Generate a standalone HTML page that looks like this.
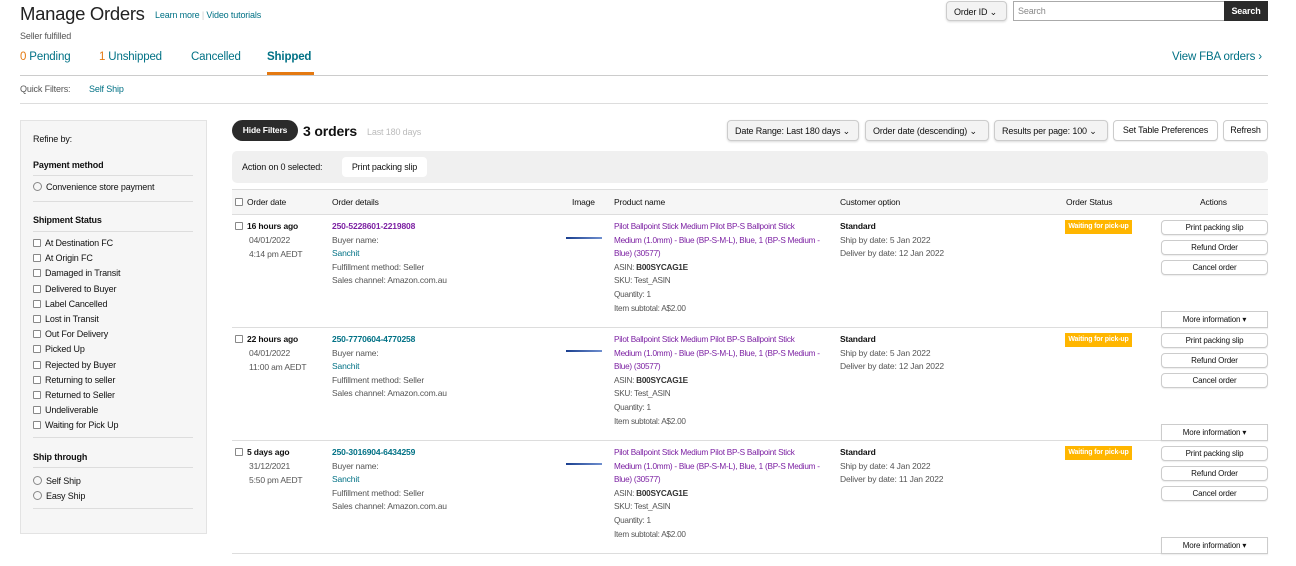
<!DOCTYPE html>
<html><head><meta charset="utf-8"><style>
*{box-sizing:border-box;margin:0;padding:0}
body{width:1296px;height:566px;background:#fff;font-family:"Liberation Sans",sans-serif;color:#111;position:relative;overflow:hidden;font-size:9px;letter-spacing:-0.15px}
.a{position:absolute;white-space:nowrap}
.teal{color:#007185}
.g{color:#555}
.btn{position:absolute;border:1px solid #ccc;border-radius:4px;background:#fff;text-align:center;font-size:8px;color:#111;box-shadow:0 1px 1px rgba(0,0,0,.08)}
.dd{position:absolute;border:1px solid #ccc;border-radius:4px;background:#f3f3f3;font-size:9px;padding:0 7px;line-height:20px;box-shadow:0 1px 2px rgba(0,0,0,.15)}
.cb{display:inline-block;width:8px;height:8px;border:1px solid #888;border-radius:1px;vertical-align:-1px;margin-right:4px;background:#fff}
.rd{display:inline-block;width:9px;height:9px;border:1px solid #888;border-radius:50%;vertical-align:-1px;margin-right:4px}
.row{position:absolute;left:232px;width:1036px;height:113px;border-bottom:1px solid #ddd}
.row .a{line-height:13.6px;font-size:8.5px}
.row .p{font-size:8.2px;letter-spacing:-0.25px}
.pur{color:#7b1fa2}
</style></head><body>
<div class="a" style="left:20px;top:3px;font-size:18.5px;color:#222;letter-spacing:-0.3px">Manage Orders</div>
<div class="a teal" style="left:155px;top:10px;font-size:9px">Learn more <span style="color:#ccc">|</span> Video tutorials</div>
<div class="a g" style="left:20px;top:31px;font-size:9px">Seller fulfilled</div>
<div class="a" style="left:20px;top:51px;font-size:11.5px"><span style="color:#e47911">0</span> <span class="teal">Pending</span></div>
<div class="a" style="left:99px;top:51px;font-size:11.5px"><span style="color:#e47911">1</span> <span class="teal">Unshipped</span></div>
<div class="a teal" style="left:191px;top:51px;font-size:11.5px">Cancelled</div>
<div class="a teal" style="left:267px;top:51px;font-size:11.5px;font-weight:bold">Shipped</div>
<div class="a" style="left:267px;top:72px;width:47px;height:3px;background:#e47911"></div>
<div class="a" style="left:20px;top:75px;width:1248px;height:1px;background:#ccc"></div>
<div class="a g" style="left:20px;top:84px;font-size:9px">Quick Filters:</div>
<div class="a teal" style="left:89px;top:84px;font-size:9px">Self Ship</div>
<div class="a" style="left:20px;top:103px;width:1248px;height:1px;background:#ddd"></div>
<div class="dd" style="left:946px;top:1px;height:20px;width:61px">Order ID ⌄</div>
<div class="a" style="left:1013px;top:1px;width:212px;height:20px;border:1px solid #aaa;font-size:9px;color:#888;line-height:18px;padding-left:4px">Search</div>
<div class="a" style="left:1224px;top:1px;width:44px;height:20px;background:#2b2b2b;color:#fff;font-weight:bold;font-size:9px;line-height:20px;text-align:center">Search</div>
<div class="a teal" style="left:1172px;top:51px;font-size:11.5px">View FBA orders ›</div>

<div class="a" style="left:20px;top:120px;width:187px;height:414px;background:#f6f6f6;border:1px solid #e3e3e3"></div>
<div class="a" style="left:33px;top:134px;font-size:9px">Refine by:</div>
<div class="a" style="left:33px;top:160px;font-size:9px;font-weight:bold">Payment method</div>
<div class="a" style="left:33px;top:175px;width:160px;height:1px;background:#ddd"></div>
<div class="a" style="left:33px;top:182px;font-size:9px"><span class="rd"></span>Convenience store payment</div>
<div class="a" style="left:33px;top:201px;width:160px;height:1px;background:#ddd"></div>
<div class="a" style="left:33px;top:215px;font-size:9px;font-weight:bold">Shipment Status</div>
<div class="a" style="left:33px;top:231px;width:160px;height:1px;background:#ddd"></div>
<div class="a" style="left:33px;top:236px;font-size:9px;line-height:15.2px">
<span class="cb"></span>At Destination FC<br><span class="cb"></span>At Origin FC<br><span class="cb"></span>Damaged in Transit<br><span class="cb"></span>Delivered to Buyer<br><span class="cb"></span>Label Cancelled<br><span class="cb"></span>Lost in Transit<br><span class="cb"></span>Out For Delivery<br><span class="cb"></span>Picked Up<br><span class="cb"></span>Rejected by Buyer<br><span class="cb"></span>Returning to seller<br><span class="cb"></span>Returned to Seller<br><span class="cb"></span>Undeliverable<br><span class="cb"></span>Waiting for Pick Up</div>
<div class="a" style="left:33px;top:437px;width:160px;height:1px;background:#ddd"></div>
<div class="a" style="left:33px;top:452px;font-size:9px;font-weight:bold">Ship through</div>
<div class="a" style="left:33px;top:467px;width:160px;height:1px;background:#ddd"></div>
<div class="a" style="left:33px;top:474px;font-size:9px;line-height:15px"><span class="rd"></span>Self Ship<br><span class="rd"></span>Easy Ship</div>
<div class="a" style="left:33px;top:508px;width:160px;height:1px;background:#ddd"></div>

<div class="a" style="left:232px;top:120px;width:66px;height:21px;border-radius:11px;background:#2b2b2b;color:#fff;font-weight:bold;font-size:8.5px;line-height:21px;text-align:center">Hide Filters</div>
<div class="a" style="left:303px;top:123px;font-size:14px;font-weight:bold">3 orders</div>
<div class="a" style="left:367px;top:127px;font-size:9px;color:#bbb">Last 180 days</div>
<div class="dd" style="left:727px;top:120px;height:21px;width:132px">Date Range: Last 180 days ⌄</div>
<div class="dd" style="left:865px;top:120px;height:21px;width:124px">Order date (descending) ⌄</div>
<div class="dd" style="left:994px;top:120px;height:21px;width:114px">Results per page: 100 ⌄</div>
<div class="btn" style="left:1113px;top:120px;width:105px;height:21px;font-size:9px;line-height:19px">Set Table Preferences</div>
<div class="btn" style="left:1223px;top:120px;width:45px;height:21px;font-size:9px;line-height:19px">Refresh</div>
<div class="a" style="left:232px;top:151px;width:1036px;height:32px;background:#f0f0f0;border-radius:5px"></div>
<div class="a" style="left:242px;top:162px;font-size:9px">Action on 0 selected:</div>
<div class="a" style="left:342px;top:157px;width:85px;height:20px;background:#fff;border-radius:4px;font-size:9px;line-height:20px;text-align:center">Print packing slip</div>

<div class="a" style="left:232px;top:189px;width:1036px;height:26px;background:#f6f6f6;border-top:1px solid #ddd;border-bottom:1px solid #ddd"></div>
<div class="a" style="left:235px;top:197px;font-size:8.5px"><span class="cb"></span>Order date</div>
<div class="a" style="left:332px;top:197px;font-size:8.5px">Order details</div>
<div class="a" style="left:572px;top:197px;font-size:8.5px">Image</div>
<div class="a" style="left:614px;top:197px;font-size:8.5px">Product name</div>
<div class="a" style="left:840px;top:197px;font-size:8.5px">Customer option</div>
<div class="a" style="left:1066px;top:197px;font-size:8.5px">Order Status</div>
<div class="a" style="left:1200px;top:197px;font-size:8.5px">Actions</div>

<div class="row" style="top:215px">
<div class="a" style="left:3px;top:5px"><span class="cb"></span><b>16 hours ago</b></div>
<div class="a g" style="left:17px;top:19px">04/01/2022<br>4:14 pm AEDT</div>
<div class="a g" style="left:100px;top:5px"><b class="pur">250-5228601-2219808</b><br>Buyer name:<br><span class="teal">Sanchit</span><br>Fulfillment method: Seller<br>Sales channel: Amazon.com.au</div>
<div class="a" style="left:334px;top:22px;width:36px;height:2px;background:linear-gradient(90deg,#1a3f8f,#6f8fcf)"></div>
<div class="a g p" style="left:382px;top:5px"><span class="pur">Pilot Ballpoint Stick Medium Pilot BP-S Ballpoint Stick<br>Medium (1.0mm) - Blue (BP-S-M-L), Blue, 1 (BP-S Medium -<br>Blue) (30577)</span><br>ASIN: <b style="color:#333">B00SYCAG1E</b><br>SKU: Test_ASIN<br>Quantity: 1<br>Item subtotal: A$2.00</div>
<div class="a g" style="left:608px;top:5px"><b style="color:#111">Standard</b><br>Ship by date: 5 Jan 2022<br>Deliver by date: 12 Jan 2022</div>
<div class="a" style="left:833px;top:5px;width:67px;height:14px;background:#ffb600;color:#fff;font-size:7px;font-weight:bold;line-height:14px;text-align:center">Waiting for pick-up</div>
<div class="btn" style="left:929px;top:5px;width:107px;height:15px;line-height:13px">Print packing slip</div>
<div class="btn" style="left:929px;top:25px;width:107px;height:15px;line-height:13px">Refund Order</div>
<div class="btn" style="left:929px;top:45px;width:107px;height:15px;line-height:13px">Cancel order</div>
<div class="btn" style="left:929px;top:96px;width:107px;height:17px;line-height:15px;border-radius:0">More information ▾</div>
</div>
<div class="row" style="top:328px">
<div class="a" style="left:3px;top:5px"><span class="cb"></span><b>22 hours ago</b></div>
<div class="a g" style="left:17px;top:19px">04/01/2022<br>11:00 am AEDT</div>
<div class="a g" style="left:100px;top:5px"><b class="teal">250-7770604-4770258</b><br>Buyer name:<br><span class="teal">Sanchit</span><br>Fulfillment method: Seller<br>Sales channel: Amazon.com.au</div>
<div class="a" style="left:334px;top:22px;width:36px;height:2px;background:linear-gradient(90deg,#1a3f8f,#6f8fcf)"></div>
<div class="a g p" style="left:382px;top:5px"><span class="pur">Pilot Ballpoint Stick Medium Pilot BP-S Ballpoint Stick<br>Medium (1.0mm) - Blue (BP-S-M-L), Blue, 1 (BP-S Medium -<br>Blue) (30577)</span><br>ASIN: <b style="color:#333">B00SYCAG1E</b><br>SKU: Test_ASIN<br>Quantity: 1<br>Item subtotal: A$2.00</div>
<div class="a g" style="left:608px;top:5px"><b style="color:#111">Standard</b><br>Ship by date: 5 Jan 2022<br>Deliver by date: 12 Jan 2022</div>
<div class="a" style="left:833px;top:5px;width:67px;height:14px;background:#ffb600;color:#fff;font-size:7px;font-weight:bold;line-height:14px;text-align:center">Waiting for pick-up</div>
<div class="btn" style="left:929px;top:5px;width:107px;height:15px;line-height:13px">Print packing slip</div>
<div class="btn" style="left:929px;top:25px;width:107px;height:15px;line-height:13px">Refund Order</div>
<div class="btn" style="left:929px;top:45px;width:107px;height:15px;line-height:13px">Cancel order</div>
<div class="btn" style="left:929px;top:96px;width:107px;height:17px;line-height:15px;border-radius:0">More information ▾</div>
</div>
<div class="row" style="top:441px">
<div class="a" style="left:3px;top:5px"><span class="cb"></span><b>5 days ago</b></div>
<div class="a g" style="left:17px;top:19px">31/12/2021<br>5:50 pm AEDT</div>
<div class="a g" style="left:100px;top:5px"><b class="teal">250-3016904-6434259</b><br>Buyer name:<br><span class="teal">Sanchit</span><br>Fulfillment method: Seller<br>Sales channel: Amazon.com.au</div>
<div class="a" style="left:334px;top:22px;width:36px;height:2px;background:linear-gradient(90deg,#1a3f8f,#6f8fcf)"></div>
<div class="a g p" style="left:382px;top:5px"><span class="pur">Pilot Ballpoint Stick Medium Pilot BP-S Ballpoint Stick<br>Medium (1.0mm) - Blue (BP-S-M-L), Blue, 1 (BP-S Medium -<br>Blue) (30577)</span><br>ASIN: <b style="color:#333">B00SYCAG1E</b><br>SKU: Test_ASIN<br>Quantity: 1<br>Item subtotal: A$2.00</div>
<div class="a g" style="left:608px;top:5px"><b style="color:#111">Standard</b><br>Ship by date: 4 Jan 2022<br>Deliver by date: 11 Jan 2022</div>
<div class="a" style="left:833px;top:5px;width:67px;height:14px;background:#ffb600;color:#fff;font-size:7px;font-weight:bold;line-height:14px;text-align:center">Waiting for pick-up</div>
<div class="btn" style="left:929px;top:5px;width:107px;height:15px;line-height:13px">Print packing slip</div>
<div class="btn" style="left:929px;top:25px;width:107px;height:15px;line-height:13px">Refund Order</div>
<div class="btn" style="left:929px;top:45px;width:107px;height:15px;line-height:13px">Cancel order</div>
<div class="btn" style="left:929px;top:96px;width:107px;height:17px;line-height:15px;border-radius:0">More information ▾</div>
</div>
</body></html>
